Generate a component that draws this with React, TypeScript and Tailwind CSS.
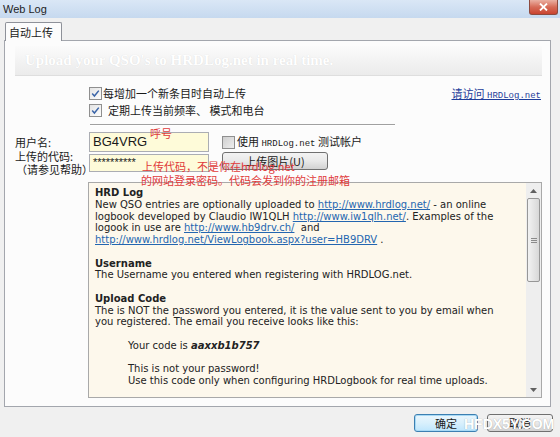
import React from "react";

function Check({ checked }: { checked?: boolean }) {
  return (
    <span
      className={
        "inline-flex h-[13px] w-[13px] shrink-0 items-center justify-center border border-[#8f8f8f] " +
        (checked
          ? "bg-linear-to-br from-[#e4e4e4] to-[#fdfdfd]"
          : "bg-linear-to-br from-[#cfcfcf] to-[#eeeeee]")
      }
    >
      {checked && (
        <svg width="9" height="9" viewBox="0 0 9 9">
          <path d="M1.2 4.6 L3.4 7 L7.8 1.6" stroke="#3a64a8" strokeWidth="1.5" fill="none" />
        </svg>
      )}
    </span>
  );
}

function A({ children }: { children: React.ReactNode }) {
  return <span className="text-[#2466b0] underline">{children}</span>;
}

const help: (React.ReactNode | null)[] = [
  <b>HRD Log</b>,
  <>
    New QSO entries are optionally uploaded to <A>http://www.hrdlog.net/</A> - an online
  </>,
  <>
    logbook developed by Claudio IW1QLH <A>http://www.iw1qlh.net/</A>. Examples of the
  </>,
  <>
    logook in use are <A>http://www.hb9drv.ch/</A>{"\u00a0 and"}
  </>,
  <>
    <A>http://www.hrdlog.net/ViewLogbook.aspx?user=HB9DRV</A> .
  </>,
  null,
  <b>Username</b>,
  <>The Username you entered when registering with HRDLOG.net.</>,
  null,
  <b>Upload Code</b>,
  <>The is NOT the password you entered, it is the value sent to you by email when</>,
  <>you registered. The email you receive looks like this:</>,
  null,
  <span className="pl-[33px]">
    Your code is <b className="italic">aaxxb1b757</b>
  </span>,
  null,
  <span className="pl-[33px]">This is not your password!</span>,
  <span className="pl-[33px]">Use this code only when configuring HRDLogbook for real time uploads.</span>,
];

export default function App() {
  return (
    <div className="relative h-[437px] w-[560px] overflow-hidden bg-[#f0f0f0] font-['Noto_Sans_CJK_SC',sans-serif] text-[11px] text-[#1a1a1a]">
      {/* Title bar */}
      <div className="flex h-[18px] items-start justify-between bg-linear-to-b from-[#dae7f6] to-[#c6d9ef]">
        <span className="pl-[3px] pt-[2px] font-['Liberation_Sans',sans-serif] text-[11px] leading-[14px] text-[#1e1e1e]">
          Web Log
        </span>
        <div className="mr-[2px] flex h-[15px] w-[29px] items-center justify-center rounded-b-[3px] border border-t-0 border-[#8d4a3e] bg-linear-to-b from-[#eab0a3] via-[#d66b58] to-[#c9432f]">
          <svg width="9" height="8" viewBox="0 0 9 8">
            <path d="M1 0.5 L8 7.5 M8 0.5 L1 7.5" stroke="#ffffff" strokeWidth="1.8" />
          </svg>
        </div>
      </div>

      {/* Tabs */}
      <div className="pl-[4px] pr-[9px] pt-[4px]">
        <div className="flex">
          <div className="relative z-10 -mb-px ml-px h-[19px] w-[57px] rounded-t-[2px] border border-b-0 border-[#8e9199] bg-[#fcfcfc] pl-[3px] leading-[18px]">
            自动上传
          </div>
        </div>
        <div className="h-[367px] border border-[#a3a6ad] bg-[#fcfcfc] pl-[10px] pr-[8px] pt-[5px]">
          {/* Banner */}
          <div className="flex h-[30px] items-center border-b border-[#dedede] bg-linear-to-b from-[#fbfbfb] to-[#ebebeb] pl-[10px] font-['Liberation_Serif',serif] text-[15px] font-bold text-white [text-shadow:0_0_1px_rgba(0,0,0,0.12)]">
            Upload your QSO's to HRDLog.net in real time.
          </div>

          {/* Checkbox rows + link */}
          <div className="mt-[11px] flex">
            <div className="w-[74px] shrink-0" />
            <div className="flex flex-col gap-[4px]">
              <div className="flex h-[13px] items-center gap-[1px] leading-[13px]">
                <Check checked />
                <span>每增加一个新条目时自动上传</span>
              </div>
              <div className="flex h-[13px] items-center gap-[6px] leading-[13px]">
                <Check checked />
                <span>定期上传当前频率、 模式和电台</span>
              </div>
            </div>
            <div className="ml-auto mr-[1px] leading-[13px] text-[#1e3d9a] underline">
              请访问 <span className="font-['Liberation_Mono',monospace] text-[9px]">HRDLog.net</span>
            </div>
          </div>

          {/* Separator */}
          <div className="ml-[75px] mt-[7px] h-[2px] w-[305px] border-t border-b border-t-[#a0a0a0] border-b-white" />

          {/* Username row */}
          <div className="mt-[6px] flex h-[20px] items-center">
            <div className="w-[74px] shrink-0">用户名:</div>
            <div className="flex h-[20px] w-[120px] items-center border border-[#abadb3] bg-[#fefbd9] pl-[3px] font-['Liberation_Sans',sans-serif] text-[13px]">
              BG4VRG
            </div>
            <div className="ml-[13px] flex items-center gap-[1px]">
              <Check />
              <span className="pl-[1px]">
                使用 <span className="font-['Liberation_Mono',monospace] text-[9px]">HRDLog.net</span> 测试帐户
              </span>
            </div>
          </div>

          {/* Upload code row */}
          <div className="mt-px flex h-[19px] items-start">
            <div className="-mt-[3px] w-[74px] shrink-0 leading-[13px]">
              <div>上传的代码:</div>
              <div className="pl-px">（请参见帮助）</div>
            </div>
            <div className="mt-px flex h-[18px] w-[120px] items-start border border-[#abadb3] bg-[#fefbd9] pl-[3px] font-['Liberation_Sans',sans-serif] text-[11px] leading-[14px]">
              **********
            </div>
            <div className="-mt-px ml-[13px] flex h-[18px] w-[106px] items-center justify-center rounded-[3px] border border-[#707070] bg-linear-to-b from-[#f3f3f3] via-[#e9e9e9] to-[#d2d2d2] leading-[14px]">
              上传图片(U)
            </div>
          </div>

          {/* Help box */}
          <div className="ml-[73px] mt-[10px] flex h-[216px] border border-[#a9a9a9] bg-[#fdf8ec]">
            <div className="flex-1 overflow-hidden pl-[6px] pt-[4px] font-['DejaVu_Sans',sans-serif] text-[10px] leading-[11.75px] text-[#222]">
              {help.map((l, i) => (
                <div key={i} className="h-[11.75px] whitespace-nowrap">
                  {l}
                </div>
              ))}
            </div>
            <div className="flex w-[15px] flex-col bg-[#eeeeee]">
              <div className="flex h-[15px] items-center justify-center text-[#555]">
                <svg width="7" height="4" viewBox="0 0 7 4">
                  <path d="M0 4 L3.5 0 L7 4 Z" fill="#606060" />
                </svg>
              </div>
              <div className="mx-px flex h-[84px] flex-col items-center justify-center gap-[1px] rounded-[2px] border border-[#979797] bg-linear-to-r from-[#f2f2f2] to-[#d8d8d8]">
                <span className="h-px w-[6px] bg-[#8a8a8a]" />
                <span className="h-px w-[6px] bg-[#8a8a8a]" />
                <span className="h-px w-[6px] bg-[#8a8a8a]" />
              </div>
              <div className="flex-1" />
              <div className="flex h-[15px] items-center justify-center">
                <svg width="7" height="4" viewBox="0 0 7 4">
                  <path d="M0 0 L3.5 4 L7 0 Z" fill="#606060" />
                </svg>
              </div>
            </div>
          </div>
        </div>
      </div>

      {/* Footer buttons */}
      <div className="flex justify-end gap-[9px] pr-[7px] pt-[7px]">
        <div className="flex h-[18px] w-[64px] items-center justify-center rounded-[3px] border border-[#3c7fb1] bg-linear-to-b from-[#eaf6fd] via-[#d9f0fc] to-[#bee6fd] shadow-[inset_0_0_0_1px_#a7d9f5] leading-[14px]">
          确定
        </div>
        <div className="flex h-[18px] w-[66px] items-center justify-center rounded-[3px] border border-[#707070] bg-linear-to-b from-[#f3f3f3] via-[#e9e9e9] to-[#d2d2d2] leading-[14px]">
          取消
        </div>
      </div>

      {/* Red annotations */}
      <div className="absolute left-[150px] top-[127px] leading-[12px] text-[#e03a3a]">呼号</div>
      <div className="absolute left-[142px] top-[160px] leading-[12px] text-[#e03a3a]">
        上传代码，不是你在hrdlog.net
      </div>
      <div className="absolute left-[141px] top-[174px] leading-[12px] text-[#e03a3a]">
        的网站登录密码。代码会发到你的注册邮箱
      </div>

      {/* Watermark */}
      <div className="absolute left-[464px] top-[417px] font-['Liberation_Sans',sans-serif] text-[14px] font-bold leading-[14px] text-white [text-shadow:0_0_1px_rgba(0,0,0,0.35)]">
        HFDX5Y.COM
      </div>
    </div>
  );
}
